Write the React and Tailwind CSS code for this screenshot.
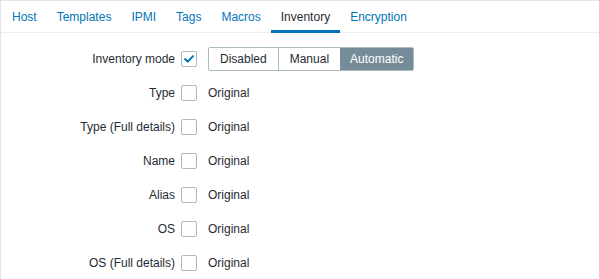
import React from "react";

const tabs = ["Host", "Templates", "IPMI", "Tags", "Macros", "Inventory", "Encryption"];

const fields = [
  "Type",
  "Type (Full details)",
  "Name",
  "Alias",
  "OS",
  "OS (Full details)",
];

function Checkbox({ checked }) {
  return (
    <span className="flex h-4 w-4 shrink-0 items-center justify-center rounded-[2px] border border-[#acbbc2] bg-white">
      {checked && (
        <svg width="12" height="12" viewBox="0 0 12 12" fill="none">
          <path
            d="M2.2 6.2 L4.8 8.6 L9.8 3.4"
            stroke="#0275b8"
            strokeWidth="2"
            strokeLinecap="square"
          />
        </svg>
      )}
    </span>
  );
}

function Row({ label, children }) {
  return (
    <div className="flex h-6 items-center">
      <div className="w-[174px] shrink-0 text-right">{label}</div>
      <div className="ml-[6px] flex items-center gap-[11px]">{children}</div>
    </div>
  );
}

export default function App() {
  return (
    <div
      className="min-h-screen border-l border-t border-[#dfe4e7] bg-white text-[12px] leading-[14px] text-[#1f2c33]"
      style={{ fontFamily: '"Liberation Sans", Arial, sans-serif' }}
    >
      <ul className="flex h-[32px] items-center border-b border-[#ebeef0] pl-[1px]">
        {tabs.map((t) => {
          const active = t === "Inventory";
          return (
            <li
              key={t}
              className={`relative flex h-full items-center px-[10px] ${
                active ? "text-[#1f2c33]" : "text-[#0275b8]"
              }`}
            >
              {t}
              {active && (
                <span className="absolute bottom-[-1px] left-0 right-0 h-[3px] bg-[#0275b8]" />
              )}
            </li>
          );
        })}
      </ul>

      <div className="flex flex-col gap-[10px] pt-[14px]">
        <Row label="Inventory mode">
          <Checkbox checked />
          <div className="flex h-6 overflow-hidden rounded-[2px] border border-[#acbbc2]">
            <span className="flex items-center px-[11px] text-[#1f2c33]">Disabled</span>
            <span className="flex items-center border-l border-[#acbbc2] px-[11px] text-[#1f2c33]">
              Manual
            </span>
            <span className="flex items-center bg-[#768d99] px-[10px] text-white">
              Automatic
            </span>
          </div>
        </Row>
        {fields.map((f) => (
          <Row key={f} label={f}>
            <Checkbox />
            <span>Original</span>
          </Row>
        ))}
      </div>
    </div>
  );
}
